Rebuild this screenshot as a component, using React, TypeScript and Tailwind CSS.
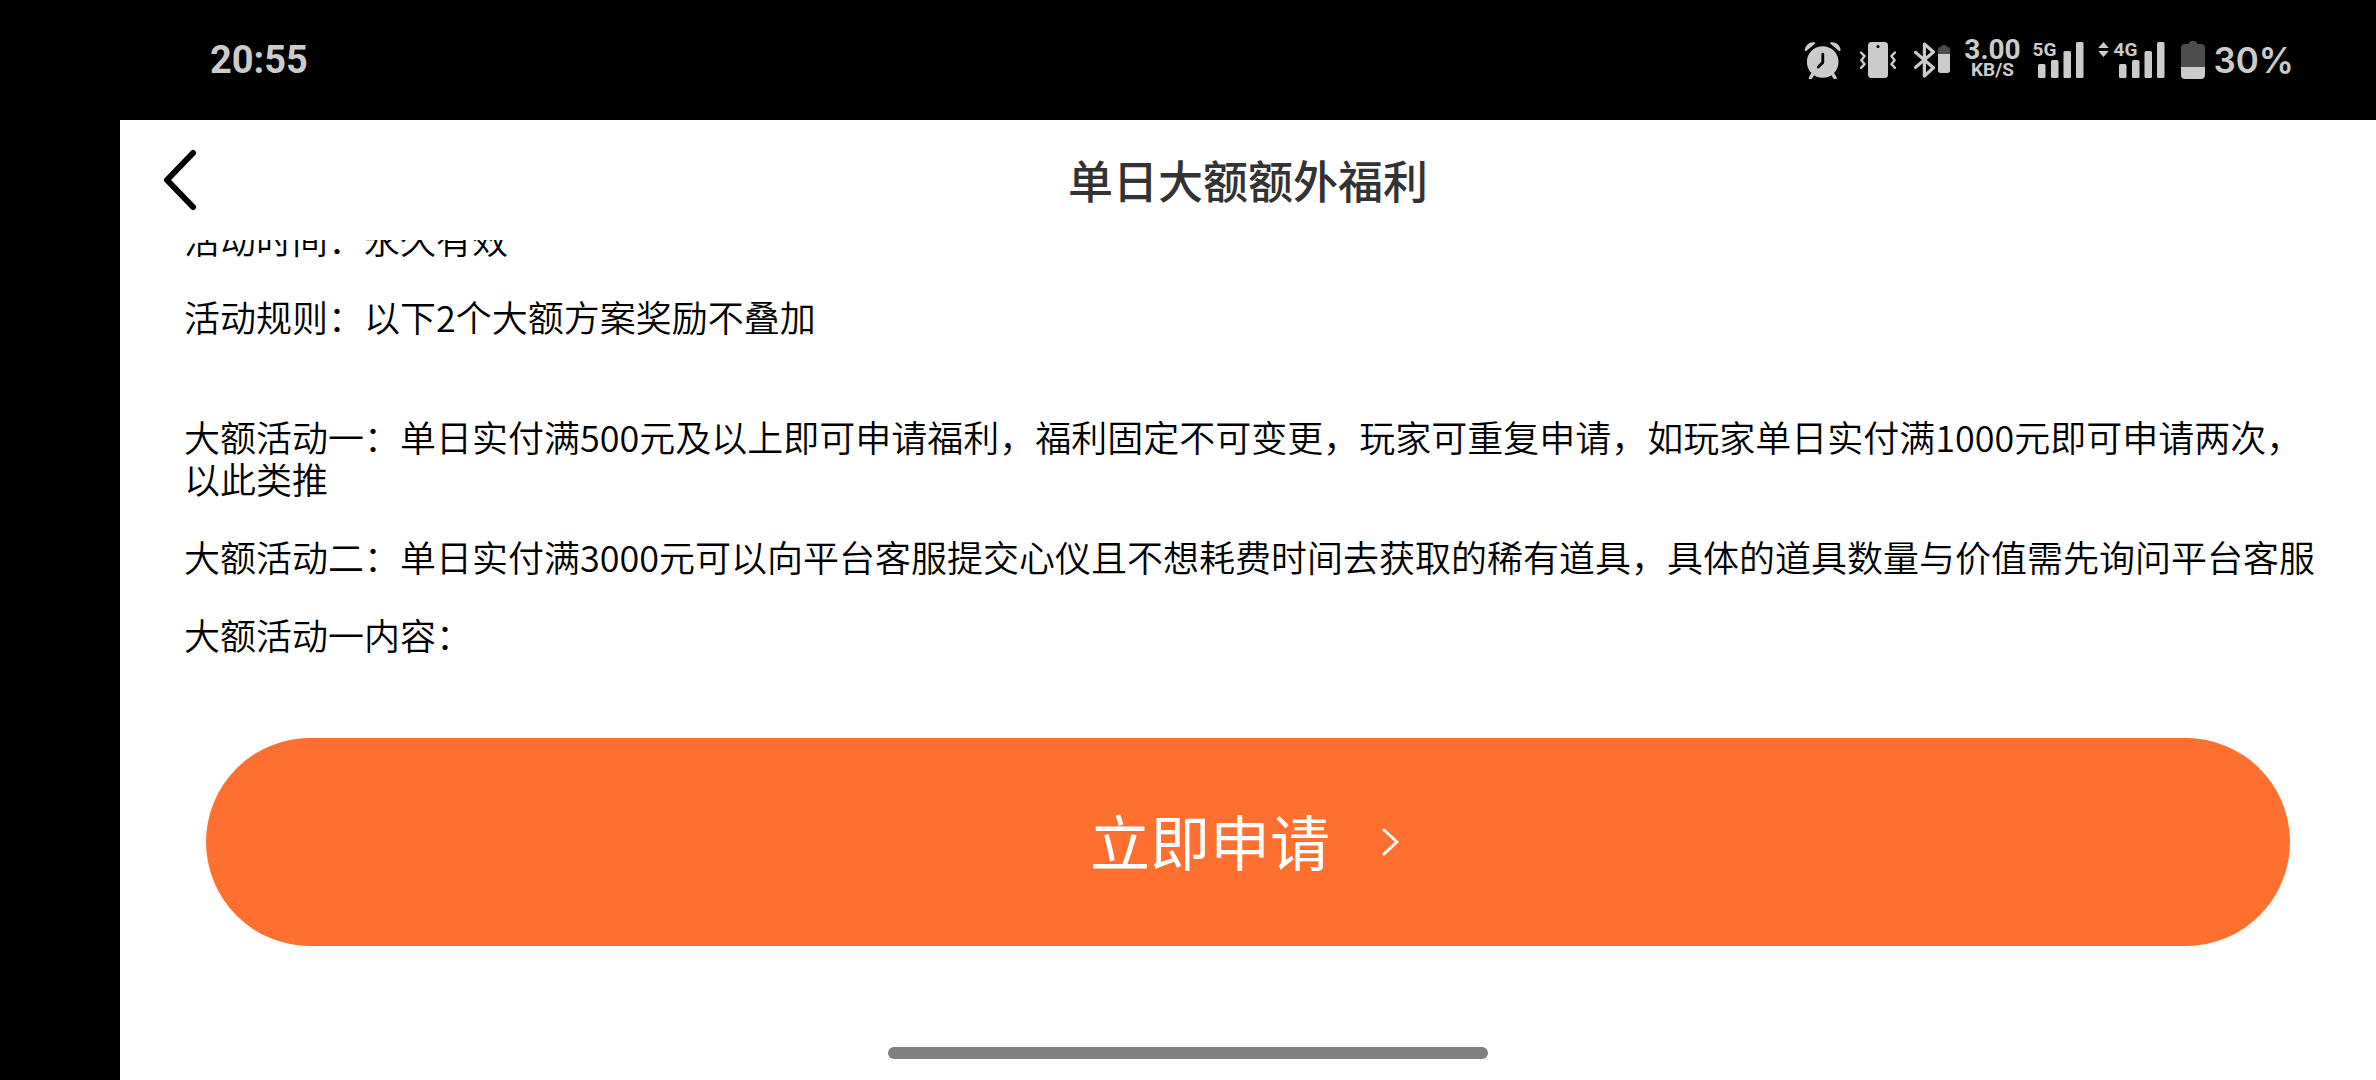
import type { ReactNode } from 'react';

const AlarmIcon = () => (
  <svg width="38" height="38" viewBox="0 0 38 38" fill="currentColor" aria-hidden="true">
    <path d="M0.8 8.6C1.6 3.8 6 0.4 10.9 1.4c.6.1.7.7.3 1.1L2.6 9.8c-.9.7-2 .1-1.8-1.2Z" />
    <path d="M36.6 8.6C35.8 3.8 31.4 0.4 26.5 1.4c-.6.1-.7.7-.3 1.1l8.6 7.3c.9.7 2 .1 1.8-1.2Z" />
    <circle cx="18.7" cy="21" r="15.8" />
    <path d="M9.5 32l-3 4.8M28 32l3 4.8" stroke="currentColor" strokeWidth="3.4" strokeLinecap="round" />
    <path d="M18.8 13.2v8.4l-4.6 4.4" stroke="#000" strokeWidth="2.8" strokeLinecap="round" strokeLinejoin="round" fill="none" />
  </svg>
);

const VibrateIcon = () => (
  <svg width="36" height="36" viewBox="0 0 36 36" fill="none" aria-hidden="true">
    <rect x="8" y="0" width="20" height="36" rx="3.5" fill="currentColor" />
    <circle cx="18" cy="4.4" r="1.5" fill="#000" />
    <path d="M1 10.5l3.6 3.6L1.4 18.2l3.2 4L1 25.8M35 10.5l-3.6 3.6 3.2 4.1-3.2 4 3.6 3.6" stroke="currentColor" strokeWidth="2.4" strokeLinejoin="round" strokeLinecap="round" />
  </svg>
);

const BluetoothIcon = () => (
  <svg width="36" height="36" viewBox="0 0 36 36" fill="none" aria-hidden="true">
    <path d="M1.6 10.4L19.4 25.8 10.4 34V2l9 8L1.6 25.4" stroke="currentColor" strokeWidth="3.2" strokeLinejoin="round" strokeLinecap="round" />
    <path d="M24 12V7.2c0-1.4.7-2.2 2-2.2h1c0-1.3.8-2 2-2h2c1.2 0 2 .7 2 2h1c1.3 0 2 .8 2 2.2V12Z" fill="#4a4a4a" />
    <path d="M24 12h12v16.5c0 1.6-.9 2.5-2.5 2.5h-7c-1.6 0-2.5-.9-2.5-2.5Z" fill="currentColor" />
  </svg>
);

const BatteryIcon = () => (
  <svg width="24" height="38" viewBox="0 0 24 38" aria-hidden="true">
    <path d="M0 26V7c0-2.5 1.5-4 4-4h3.5c.6-2 1.6-3 3.5-3h2c1.9 0 2.9 1 3.5 3H20c2.5 0 4 1.5 4 4v19Z" fill="#4d4d4d" />
    <path d="M0 26h24v8c0 2.5-1.5 4-4 4H4c-2.5 0-4-1.5-4-4Z" fill="currentColor" />
  </svg>
);

interface SignalProps {
  label: string;
  children?: ReactNode;
}

const Signal = ({ label, children }: SignalProps) => (
  <div className="flex items-start">
    {children}
    <div className="relative">
      <svg width="52" height="36" viewBox="0 0 52 36" fill="currentColor" aria-hidden="true">
        <rect x="6" y="22" width="7.5" height="14" rx="1.5" />
        <rect x="19" y="18" width="7.5" height="18" rx="1.5" />
        <rect x="31.5" y="9" width="7.5" height="27" rx="1.5" />
        <rect x="44" y="0" width="7.5" height="36" rx="1.5" />
      </svg>
      <span className="absolute left-0 -top-1 text-[19px] leading-6 font-bold">{label}</span>
    </div>
  </div>
);

const StatusBar = () => (
  <header className="h-[120px] shrink-0 pl-[210px] pr-[82px] flex items-center justify-between text-[#cbcbcb] font-['Roboto','Noto_Sans_CJK_SC',sans-serif]">
    <time className="text-[38px] leading-10 font-bold">20:55</time>
    <div className="flex items-center">
      <div className="flex items-center gap-[18px]">
        <AlarmIcon />
        <VibrateIcon />
        <BluetoothIcon />
      </div>
      <div className="ml-3 w-[60px] flex flex-col items-center font-bold">
        <span className="text-[28px] leading-5">3.00</span>
        <span className="text-[19px] leading-5">KB/S</span>
      </div>
      <div className="ml-2.5 flex gap-3.5">
        <Signal label="5G" />
        <Signal label="4G">
          <svg className="mr-1" width="11" height="15" viewBox="0 0 11 15" fill="currentColor" aria-hidden="true">
            <path d="M5.5 0L10.8 6H.2ZM5.5 15L.2 9h10.6Z" />
          </svg>
        </Signal>
      </div>
      <div className="ml-4 flex items-center gap-2">
        <BatteryIcon />
        <span className="font-['Inter',sans-serif] text-[35px] leading-10 font-semibold">30%</span>
      </div>
    </div>
  </header>
);

const TitleBar = () => (
  <div className="h-[120px] shrink-0 px-10 grid grid-cols-[1fr_auto_1fr] items-center">
    <button type="button" aria-label="返回" className="justify-self-start">
      <svg width="40" height="64" viewBox="0 0 40 64" fill="none" stroke="#000" strokeWidth="6" strokeLinecap="round" strokeLinejoin="round">
        <path d="M33 5L7 32l26 27" />
      </svg>
    </button>
    <h1 className="text-[45px] leading-[60px] font-medium text-[#333333]">单日大额额外福利</h1>
  </div>
);

const App = () => (
  <div className="relative h-screen flex flex-col bg-black font-['Noto_Sans_CJK_SC',sans-serif]">
    <StatusBar />
    <main className="ml-[120px] flex-1 min-h-0 flex flex-col bg-white">
      <TitleBar />
      <div className="flex-1 min-h-0 overflow-hidden">
        {/* scrolled down a little, the first line is half under the title bar */}
        <article className="-mt-[23px] pl-16 pr-12 text-[36px] leading-[42px] font-[350] text-black">
          <p className="mb-9">活动时间：永久有效</p>
          <p className="mb-[78px]">活动规则：以下2个大额方案奖励不叠加</p>
          <p className="mb-9">
            大额活动一：单日实付满500元及以上即可申请福利，福利固定不可变更，玩家可重复申请，如玩家单日实付满1000元即可申请两次，以此类推
          </p>
          <p className="mb-9">
            大额活动二：单日实付满3000元可以向平台客服提交心仪且不想耗费时间去获取的稀有道具，具体的道具数量与价值需先询问平台客服
          </p>
          <p>大额活动一内容：</p>
        </article>
      </div>
      <div className="shrink-0 px-[86px] pb-[134px]">
        <button type="button" className="w-full h-[208px] rounded-full bg-[#ff6f30] text-white flex items-center justify-center gap-12">
          <span className="pb-1 text-[60px] leading-[72px] font-normal">立即申请</span>
          <svg width="28" height="28" viewBox="0 0 28 28" fill="none" stroke="currentColor" strokeWidth="3" strokeLinecap="round" strokeLinejoin="round" aria-hidden="true">
            <path d="M6 2l13 12L6 26" />
          </svg>
        </button>
      </div>
    </main>
    <div className="absolute bottom-[21px] left-1/2 -translate-x-1/2 w-[600px] h-3 rounded-full bg-[#808080]" />
  </div>
);

export default App;
